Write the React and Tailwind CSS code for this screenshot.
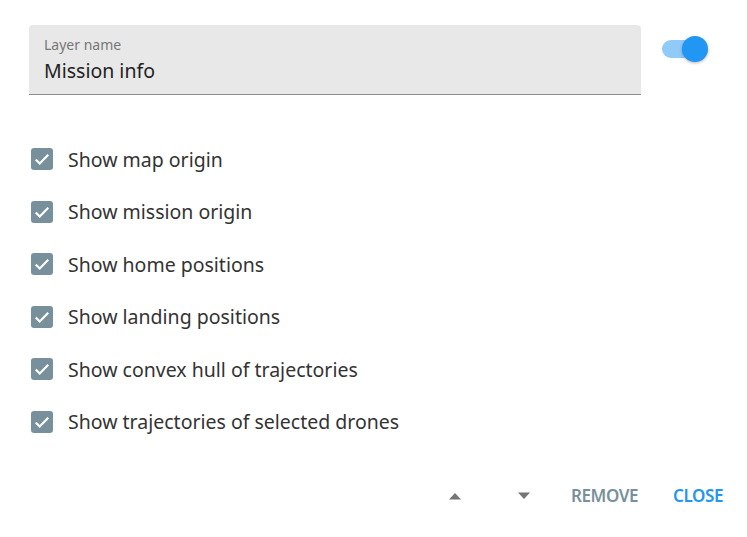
import React from 'react';

// Layer settings dialog
const options = [
  'Show map origin',
  'Show mission origin',
  'Show home positions',
  'Show landing positions',
  'Show convex hull of trajectories',
  'Show trajectories of selected drones',
];

function CheckBox() {
  return (
    <div className="w-[22px] h-[22px] rounded-[3px] bg-[#78909c] flex items-center justify-center">
      <svg className="w-[20px] h-[20px]" viewBox="0 0 24 24" fill="none" stroke="white" strokeWidth={2.6}>
        <path d="M4.5 12.5l4.8 4.8L19.5 7" />
      </svg>
    </div>
  );
}

export default function App() {
  return (
    <div
      className="w-[747px] h-[537px] bg-white flex flex-col text-[#333]"
      style={{ fontFamily: '"Noto Sans", "Open Sans", sans-serif' }}
    >
      {/* Name field + visibility switch */}
      <div className="flex items-start pt-[25px] pl-[29px]">
        <div className="w-[612px] h-[70px] bg-[#e8e8e8] rounded-t-[4px] border-b border-[#8c8c8c] px-[15px] pt-[11px]">
          <div className="text-[14px] leading-[17px] text-[#777]">Layer name</div>
          <div className="text-[19.5px] leading-[28px] mt-[4px] text-[#222]">Mission info</div>
        </div>
        <div className="flex-1 flex justify-center pt-[12px] pr-[20px]">
          <div className="relative w-[44px] h-[24px] flex items-center">
            <div className="w-[36px] h-[18px] rounded-full bg-[#90caf9]" />
            <div className="absolute right-[-2px] top-[-1px] w-[26px] h-[26px] rounded-full bg-[#2196f3] shadow-[0_1px_3px_rgba(0,0,0,0.3)]" />
          </div>
        </div>
      </div>

      {/* Options */}
      <div className="flex flex-col pl-[31px] pt-[38px]">
        {options.map((label) => (
          <div key={label} className="h-[52.5px] flex items-center gap-[15px]">
            <CheckBox />
            <span className="text-[19.5px]">{label}</span>
          </div>
        ))}
      </div>

      {/* Actions */}
      <div className="flex-1 flex items-center justify-end pr-[24px] pt-[6px]">
        <button className="w-[48px] h-[40px] flex items-center justify-center">
          <svg width="14" height="8" viewBox="0 0 14 8"><path d="M1 7.5L7 1l6 6.5z" fill="#757575" /></svg>
        </button>
        <button className="w-[48px] h-[40px] ml-[21px] flex items-center justify-center">
          <svg width="14" height="8" viewBox="0 0 14 8"><path d="M1 0.5L7 7l6-6.5z" fill="#757575" /></svg>
        </button>
        <button className="ml-[23px] text-[17px] font-semibold text-[#78909c] tracking-tight">REMOVE</button>
        <button className="ml-[35px] text-[17px] font-semibold text-[#2196f3] tracking-tight">CLOSE</button>
      </div>
    </div>
  );
}
